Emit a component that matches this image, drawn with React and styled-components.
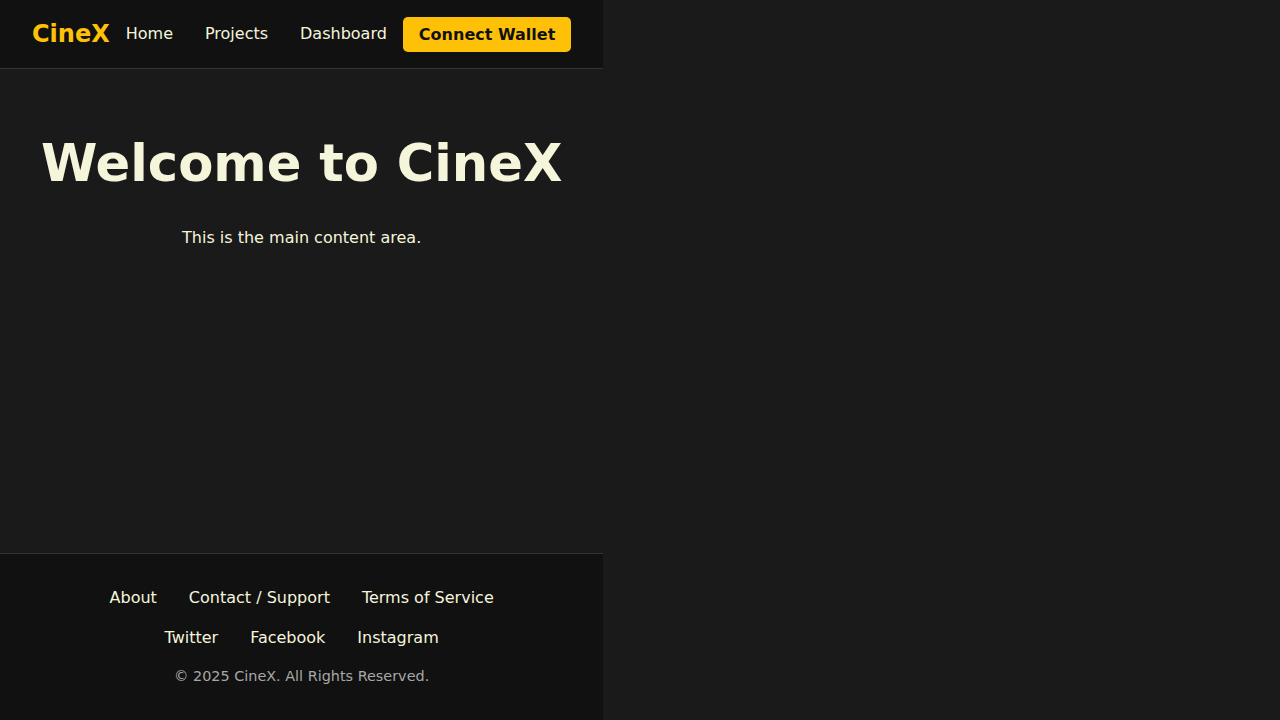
import React from "react";
import styled, { createGlobalStyle } from "styled-components";

const GlobalStyle = createGlobalStyle`
  html, body {
    margin: 0;
    padding: 0;
    background: #1a1a1a;
    font-family: "DejaVu Sans", Verdana, sans-serif;
    color: #f5f5dc;
  }
`;

const Shell = styled.div`
  display: flex;
  flex-direction: column;
  width: max-content;
  min-height: 100vh;
  background: #1a1a1a;
`;

const Header = styled.header`
  display: flex;
  align-items: center;
  height: 68px;
  padding: 0 32px;
  background: #111111;
  border-bottom: 1px solid #333333;
`;

const Logo = styled.div`
  font-size: 24px;
  font-weight: 700;
  color: #ffc107;
`;

const Nav = styled.nav`
  display: flex;
  align-items: center;
  margin-bottom: 1px;
`;

const NavLink = styled.a`
  margin: 0 16px;
  font-size: 16px;
  color: #f5f5dc;
  text-decoration: none;
`;

const WalletButton = styled.button`
  padding: 8px 16px;
  border: none;
  border-radius: 5px;
  background: #ffc107;
  color: #111111;
  font-family: "DejaVu Sans", Verdana, sans-serif;
  font-size: 16px;
  font-weight: 700;
  line-height: normal;
  cursor: pointer;
`;

const Main = styled.main`
  flex: 1;
  padding: 30px 20px;
  text-align: center;
`;

const Title = styled.h1`
  margin: 0.67em 0;
  font-size: 51.2px;
  font-weight: 700;
  color: #f5f5dc;
`;

const Lead = styled.p`
  margin: 0;
  font-size: 16px;
  color: #f5f5dc;
`;

const Footer = styled.footer`
  display: flex;
  flex-direction: column;
  align-items: center;
  gap: 21px;
  padding: 34px 20px 36px;
  background: #111111;
  border-top: 1px solid #333333;
`;

const FooterRow = styled.div`
  display: flex;
  justify-content: center;
  line-height: 19px;
`;

const FooterLink = styled.a`
  margin: 0 16px;
  font-size: 16px;
  color: #f5f5dc;
  text-decoration: none;
`;

const Copyright = styled.p`
  margin: 0;
  font-size: 14.4px;
  line-height: 16px;
  color: #a8a8a8;
`;

export default function App() {
  return (
    <>
      <GlobalStyle />
      <Shell>
        <Header>
          <Logo>CineX</Logo>
          <Nav>
            <NavLink href="#">Home</NavLink>
            <NavLink href="#">Projects</NavLink>
            <NavLink href="#">Dashboard</NavLink>
          </Nav>
          <WalletButton>Connect Wallet</WalletButton>
        </Header>
        <Main>
          <Title>Welcome to CineX</Title>
          <Lead>This is the main content area.</Lead>
        </Main>
        <Footer>
          <FooterRow>
            <FooterLink href="#">About</FooterLink>
            <FooterLink href="#">Contact / Support</FooterLink>
            <FooterLink href="#">Terms of Service</FooterLink>
          </FooterRow>
          <FooterRow>
            <FooterLink href="#">Twitter</FooterLink>
            <FooterLink href="#">Facebook</FooterLink>
            <FooterLink href="#">Instagram</FooterLink>
          </FooterRow>
          <Copyright>© 2025 CineX. All Rights Reserved.</Copyright>
        </Footer>
      </Shell>
    </>
  );
}
